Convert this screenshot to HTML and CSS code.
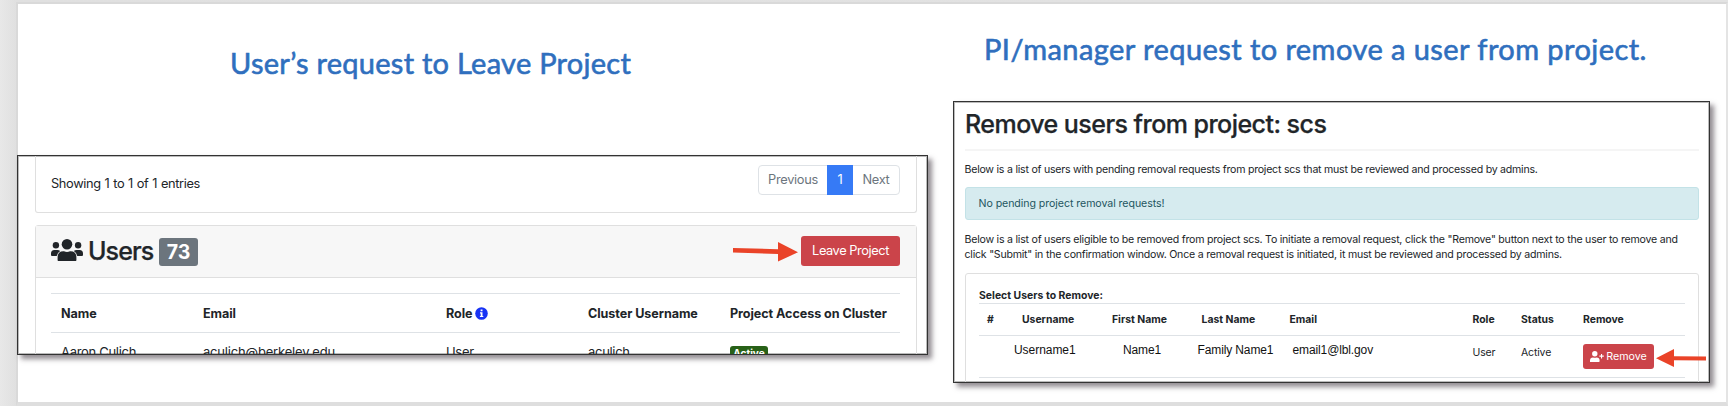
FILE: index.html
```html
<!DOCTYPE html>
<html lang="en">
<head>
<meta charset="utf-8">
<title>Project removal requests</title>
<link rel="stylesheet" href="styles.css">
</head>
<body>
<main class="slide">
  <section class="leave">
    <h1 class="title title-leave"><span>User’s request to Leave Project</span></h1>
    <div class="shot shot-leave">
      <div class="card entries">
        <p class="showing"><span>Showing 1 to 1 of 1 entries</span></p>
        <div class="pager"><span class="page prev">Previous</span><span class="page current">1</span><span class="page next">Next</span></div>
      </div>
      <div class="card users">
        <header class="users-head">
          <svg class="group-icon" viewBox="0 0 32 22">
            <circle cx="16" cy="5.3" r="5.3"/><circle cx="4.9" cy="6.2" r="3.2"/><circle cx="27.1" cy="6.2" r="3.2"/>
            <path d="M7.2 22Q6.6 22 6.6 21V18.5Q6.6 12.2 12.3 12.2H13Q16 13.6 19 12.2H19.7Q25.4 12.2 25.4 18.5V21Q25.4 22 24.8 22ZM0 14.6Q0 11 3.4 11H6.3Q8 11 9.2 12.1Q6.3 13.8 5.8 17.1H1Q0 17.1 0 16.1ZM32 14.6Q32 11 28.6 11H25.7Q24 11 22.8 12.1Q25.7 13.8 26.2 17.1H31Q32 17.1 32 16.1Z"/>
          </svg>
          <h2 class="users-title">Users</h2>
          <span class="count">73</span>
          <svg class="arrow arrow-leave" viewBox="0 0 65 20"><path d="M0 6L45 7.2V0L65 10.3L45 19.4V12L0 10.4Z"/></svg>
          <button class="btn btn-leave"><span>Leave Project</span></button>
        </header>
        <div class="table">
          <div class="row row-head"><b>Name</b><b>Email</b><b class="role">Role <svg class="info" viewBox="0 0 13 13"><circle class="info-disc" cx="6.5" cy="6.5" r="6.3"/><path class="info-mark" d="M5.6 2.5h1.9v1.7H5.6zM5 5.3h2.5v3.6h.8v1.2H4.9V8.9h.8V6.5H5z"/></svg></b><b class="th-cluster">Cluster Username</b><b class="th-access">Project Access on Cluster</b></div>
          <div class="row row-body"><span>Aaron Culich</span><span class="mail">aculich@berkeley.edu</span><span>User</span><span>aculich</span><span><i class="active">Active</i></span></div>
        </div>
      </div>
    </div>
  </section>
  <section class="remove">
    <h1 class="title title-remove"><span>PI/manager request to remove a user from project.</span></h1>
    <div class="shot shot-remove">
      <h2 class="remove-title"><span>Remove users from project: scs</span></h2>
      <p class="copy pending">Below is a list of users with pending removal requests from project scs that must be reviewed and processed by admins.</p>
      <div class="alert">No pending project removal requests!</div>
      <p class="copy eligible">Below is a list of users eligible to be removed from project scs. To initiate a removal request, click the "Remove" button next to the user to remove and<br>click "Submit" in the confirmation window. Once a removal request is initiated, it must be reviewed and processed by admins.</p>
      <div class="card picker">
        <h3 class="picker-title">Select Users to Remove:</h3>
        <div class="prow prow-head"><b>#</b><b>Username</b><b>First Name</b><b>Last Name</b><b>Email</b><b>Role</b><b>Status</b><b>Remove</b></div>
        <div class="prow prow-body">
          <span></span><span class="typed t-user">Username1</span><span class="typed t-name">Name1</span><span class="typed t-family">Family Name1</span><span class="typed t-email">email1@lbl.gov</span><span>User</span><span>Active</span>
          <div class="action">
            <button class="btn btn-remove"><svg class="user-plus" viewBox="0 0 14 11"><circle cx="4.8" cy="2.7" r="2.7"/><path d="M0 11V9.3Q0 6.4 3 6.4Q4.8 7.2 6.6 6.4Q9.6 6.4 9.6 9.3V10.2Q9.6 11 8.9 11ZM11 3h1.1v1.6h1.7v1.1h-1.7v1.7H11V5.7H9.4V4.6H11Z"/></svg><span>Remove</span></button>
            <svg class="arrow arrow-remove" viewBox="0 0 50 18"><path d="M0 9.2L18 0V7.2L50 7.4V11.5L18 11.2V18Z"/></svg>
          </div>
        </div>
      </div>
    </div>
  </section>
</main>
</body>
</html>
```
FILE: styles.css
```css
* { box-sizing: border-box; }
body { margin: 0; height: 406px; overflow: hidden; padding: 2px 0 0 16px; background: linear-gradient(90deg, #e8e8e8, #e0e0e0 16px, #e3e3e3); font-family: Inter, "Liberation Sans", sans-serif; color: #212529; }
h1, h2, h3, p { margin: 0; font-weight: 500; }
.slide { display: flex; width: 1712px; height: 404px; border: 2px solid #d9d9d9; border-bottom: 4px solid #dedede; border-right-color: #e4e4e4; background: #fff; }
.leave { width: 911px; flex: none; margin-left: -1px; margin-right: 25px; }
.remove { width: 757px; flex: none; }
.title { color: #2f6fbe; font-family: Lato, sans-serif; font-weight: 400; font-size: 29px; white-space: nowrap; -webkit-text-stroke: .6px #2f6fbe; }
.title-leave { padding: 38px 0 0 213px; height: 151px; line-height: 42px; letter-spacing: .27px; }
.title-remove { padding: 24px 0 0 31px; height: 97px; line-height: 42px; letter-spacing: .44px; }
.shot { border: 1px solid #333; background: #fff; overflow: hidden; box-shadow: 4px 4px 5px rgba(40, 30, 40, .5), inset 0 0 0 1px #bbb; }
.shot-leave { height: 200px; padding: 0 10px 0 17px; }
.shot-remove { height: 282px; padding: 0 10px 0 11px; }
.card { border: 1px solid #dfdfdf; border-radius: 3px; }
.entries { height: 57px; border-top: 0; border-radius: 0 0 3px 3px; display: flex; justify-content: space-between; padding: 9px 16px 0 15px; }
.showing { font-weight: 400; font-size: 12.8px; line-height: 38px; letter-spacing: -.36px; word-spacing: .6px; }
.pager { display: flex; height: 30px; font-size: 12.8px; line-height: 28px; color: #6c757d; letter-spacing: -.3px; text-align: center; border: 1px solid #dee2e6; border-radius: 4px; }
.prev { width: 68px; }
.current { width: 26px; margin: -1px 0; line-height: 30px; background: #367af6; color: #fff; }
.next { width: 46px; }
.users { height: 150px; margin-top: 12px; }
.users-head { display: flex; align-items: center; height: 52px; border-bottom: 1px solid #dfdfdf; background: #f7f7f7; padding: 0 16px 2px 15px; }
.group-icon { width: 32px; height: 22px; fill: #212529; margin-top: -1px; }
.users-title { font-size: 25px; width: 71px; margin-left: 5px; letter-spacing: -.9px; line-height: 32px; -webkit-text-stroke: .25px #212529; }
.count { width: 39px; height: 28px; margin: 2px 0 0; border-radius: 3px; background: #6c757d; color: #fff; font-weight: 700; font-size: 19.5px; line-height: 28px; text-align: center; }
.arrow { fill: #ea4328; flex: none; }
.arrow-leave { width: 65px; height: 20px; margin: 2px 3px 0 auto; }
.btn { font-family: inherit; border: 0; padding: 0; border-radius: 3px; background: #cb444a; color: #fff; display: flex; align-items: center; justify-content: center; }
.btn-leave { width: 99px; height: 30px; font-size: 12.8px; letter-spacing: -.42px; }
.table { padding: 15px 16px 0 15px; }
.row { display: grid; grid-template-columns: 142px 243px 142px 142px 1fr; border-top: 1px solid #dee2e6; padding-left: 10px; font-size: 13px; letter-spacing: -.3px; white-space: nowrap; }
.row-head { height: 40px; line-height: 39px; border-bottom: 1px solid #dee2e6; }
.row-head b { font-weight: 700; font-size: 12.6px; letter-spacing: -.07px; }
.row-body { border-top: 0; line-height: 20px; padding-top: 9px; }
.mail { letter-spacing: -.18px; }
.role { display: flex; align-items: center; gap: 3px; }
.info { width: 13px; height: 13px; }
.info-disc { fill: #1733f5; }
.info-mark { fill: #fff; }
.active { display: inline-block; width: 38px; height: 17px; margin-top: 4px; line-height: 15px; border-radius: 3px; background: #286118; color: #fff; font-style: normal; font-weight: 700; font-size: 10px; text-align: center; letter-spacing: 0; }
.remove-title { font-size: 25px; line-height: 36px; height: 49px; padding-top: 4px; border-bottom: 2px solid #f5f5f5; letter-spacing: -.54px; -webkit-text-stroke: .25px #212529; }
.copy { font-size: 10.6px; line-height: 15.3px; font-weight: 400; letter-spacing: -.23px; white-space: nowrap; margin-left: -.5px; }
.pending { padding-top: 10.5px; height: 36px; letter-spacing: -.24px; }
.alert { height: 33px; padding-left: 12.5px; line-height: 32px; border: 1px solid #c3e2e7; border-radius: 3px; background: #d6ebef; color: #23565f; font-size: 10.6px; letter-spacing: -.17px; }
.eligible { height: 53px; padding-top: 12px; }
.alert { letter-spacing: -.06px; margin-right: 0; }
.picker { height: 120px; padding: 0 13px; }
.picker-title { height: 29px; padding-top: 13.5px; line-height: 15px; font-size: 10.4px; font-weight: 700; letter-spacing: .03px; white-space: nowrap; }
.prow { display: grid; grid-template-columns: 35px 90px 89.5px 88px 183px 48.5px 62px 1fr; padding-left: 8px; font-size: 10.5px; white-space: nowrap; border-top: 1px solid #dee2e6; }
.prow-head { height: 32px; line-height: 32px; font-size: 10.4px; }
.prow-body { height: 43px; line-height: 33px; letter-spacing: -.15px; border-bottom: 1px solid #dee2e6; }
.typed { font-family: "Liberation Sans", Arial, sans-serif; color: #111; font-size: 12px; line-height: 28px; letter-spacing: -.12px; }
.t-user { margin-left: -8px; letter-spacing: -.05px; }
.t-name { margin-left: 11px; }
.t-family { margin-left: -4px; }
.t-email { margin-left: 3px; }
.action { display: flex; align-items: center; height: 25px; margin: 8px -22px 0 0; gap: 2px; }
.btn-remove { width: 71px; height: 25px; font-size: 10.7px; gap: 2px; flex: none; }
.user-plus { width: 14px; height: 11px; fill: #fff; }
.arrow-remove { width: 50px; height: 18px; margin-top: 2px; }
```
